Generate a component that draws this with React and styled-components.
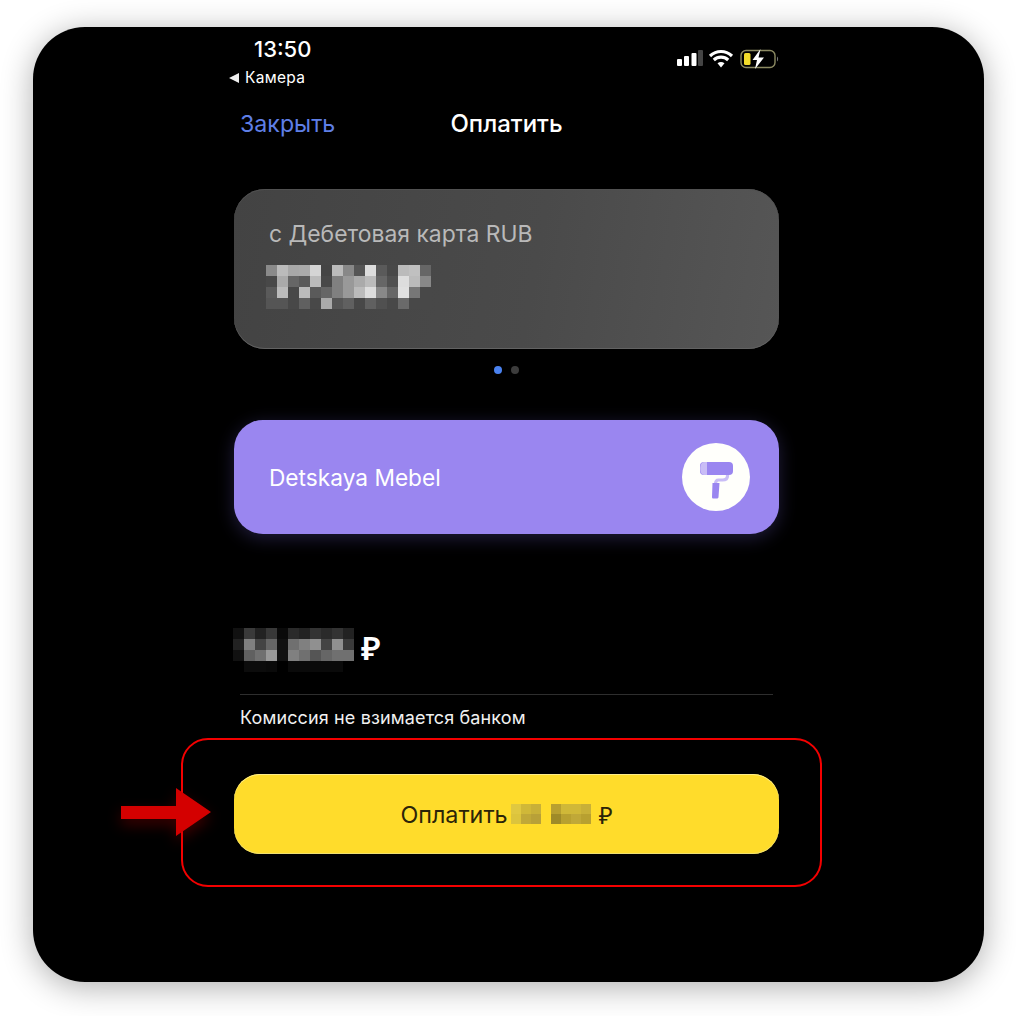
import React from "react";
import styled, { createGlobalStyle } from "styled-components";

const Global = createGlobalStyle`
  html, body { margin: 0; padding: 0; background: #fff; }
  body { font-family: Inter, "Noto Sans", "Liberation Sans", sans-serif; -webkit-font-smoothing: antialiased; }
`;
const Page = styled.div`
  width: 1016px;
  height: 1016px;
  box-sizing: border-box;
  padding: 27px 32px 34px 33px;
  overflow: hidden;
`;
const Frame = styled.main`
  width: 951px;
  height: 955px;
  box-sizing: border-box;
  padding: 9px 0 0 201px;
  background: #000;
  border-radius: 52px;
  box-shadow: 0 5px 32px rgba(0, 0, 0, 0.32);
  display: flex;
  flex-direction: column;
  align-items: flex-start;
  color: #fff;
`;
const StatusBar = styled.header`
  width: 545px;
  height: 54px;
  display: flex;
  justify-content: space-between;
  align-items: flex-start;
`;
const StatusLeft = styled.div`
  display: flex;
  flex-direction: column;
  margin-left: -5px;
`;
const Time = styled.div`
  font-size: 22px;
  line-height: 26px;
  font-weight: 500;
  padding-left: 25px;
`;
const BackLink = styled.div`
  font-size: 15.5px;
  line-height: 20px;
  margin-top: 6px;
  display: flex;
  align-items: center;
  gap: 6px;
  letter-spacing: 0.3px;
`;
const BackArrow = styled.span`
  width: 0;
  height: 0;
  border-style: solid;
  border-width: 5px 10px 5px 0;
  border-color: transparent #eee transparent transparent;
`;
const StatusIcons = styled.svg`
  display: block;
  margin-top: 13px;
`;
const NavBar = styled.nav`
  width: 545px;
  height: 40px;
  margin-top: 13px;
  box-sizing: border-box;
  padding-left: 6px;
  display: grid;
  grid-template-columns: 1fr auto 1fr;
  align-items: center;
`;
const NavLink = styled.div`
  font-size: 23.2px;
  padding-top: 2px;
  color: #5f7fe6;
`;
const NavTitle = styled.div`
  font-size: 24px;
  font-weight: 500;
  margin-right: 6px;
`;
const SourceCard = styled.section`
  width: 545px;
  height: 160px;
  margin-top: 46px;
  box-sizing: border-box;
  padding: 29px 0 0 35px;
  border-radius: 31px;
  background: linear-gradient(100deg, #434343 0%, #4a4a4a 55%, #565656 100%);
  box-shadow: inset 0 -1px 0 #626262, inset 0 1px 0 #515151;
`;
const CardLabel = styled.div`
  font-size: 22.9px;
  line-height: 32px;
  color: #b9b9b9;
`;
const Mosaic = styled.div`
  display: grid;
  grid-template-columns: repeat(${(p) => p.$cols}, ${(p) => p.$size}px);
  grid-auto-rows: ${(p) => p.$size}px;
`;
const CardMosaic = styled(Mosaic)`
  margin: 15px 0 0 -3px;
`;
const Cell = styled.i`
  display: block;
  background: ${(p) => p.$color};
`;
const Dots = styled.div`
  width: 545px;
  height: 8px;
  margin-top: 17px;
  display: flex;
  justify-content: center;
  gap: 9px;
`;
const Dot = styled.span`
  width: 8px;
  height: 8px;
  border-radius: 50%;
  background: ${(p) => (p.$active ? "#4a82f0" : "#3c3c3c")};
`;
const MerchantCard = styled.section`
  width: 545px;
  height: 114px;
  margin-top: 46px;
  box-sizing: border-box;
  padding: 0 29px 0 35px;
  border-radius: 29px;
  background: #9a86f0;
  box-shadow: 0 4px 18px rgba(120, 105, 220, 0.28);
  display: flex;
  align-items: center;
  justify-content: space-between;
  font-size: 22.7px;
`;
const Amount = styled.div`
  width: 545px;
  margin-top: 94px;
  display: flex;
  align-items: flex-start;
`;
const AmountMosaic = styled(Mosaic)`
  margin-left: -1px;
`;
const AmountSign = styled.span`
  font-size: 33px;
  line-height: 38px;
  font-weight: 600;
  margin: 1px 0 0 7px;
  font-family: "Noto Sans", Inter, sans-serif;
`;
const Divider = styled.hr`
  width: 533px;
  margin: 22px 0 0 6px;
  border: 0;
  height: 1px;
  background: #2e2e2e;
`;
const Fee = styled.div`
  margin: 12px 0 0 6px;
  font-size: 18px;
  line-height: 22px;
  color: #f0f0f0;
  letter-spacing: 0.13px;
`;
const Highlight = styled.div`
  position: relative;
  width: 641px;
  height: 149px;
  box-sizing: border-box;
  margin: 9px 0 0 -53px;
  padding: 34px 0 0 51px;
  border: 2px solid #f40000;
  border-radius: 27px;
`;
const PayButton = styled.button`
  width: 545px;
  height: 80px;
  border: 0;
  border-radius: 26px;
  background: #ffdc2b;
  box-shadow: inset 0 1px 0 #ffee8a, inset 0 -1px 0 #f0e070;
  color: #2b2408;
  font: inherit;
  font-size: 23.3px;
  display: flex;
  align-items: center;
  justify-content: center;
  padding: 0;
`;
const PayMosaic = styled(Mosaic)`
  margin: 0 10px 0 3px;
`;
const PayRuble = styled.span`
  font-size: 24px;
  margin-left: 8px;
  font-family: "Noto Sans", Inter, sans-serif;
`;
const Arrow = styled.svg`
  position: absolute;
  left: -62px;
  top: 48px;
  overflow: visible;
  filter: drop-shadow(0 6px 7px rgba(170, 0, 0, 0.35));
`;

const cardPixels = [
  "#8a8a8a #bbb #a8a8a8 #aaa #d5d5d5 #444 #bbb #888 #555 #ddd #5a5a5a #484848 #bbb #c0c0c0 #666",
  "#484848 #aaa #666 #5a5a5a #bbb #484848 #808080 #999 #aaa #bbb #666 #505050 #ddd #bbb #888",
  "#5a5a5a #bbb #484848 #bbb #5a5a5a #666 #808080 #999 #bbb #ddd #888 #666 #e0e0e0 #777 #484848",
  "#555 #555 #484848 #606060 #484848 #aaa #555 #606060 #484848 #606060 #505050 #484848 #6a6a6a #484848 #484848",
].join(" ").split(" ");
const amountPixels = [
  "#111 #3a3a3a #222 #383838 #0a0a0a #2a2a2a #222 #333 #2a2a2a #333 #222",
  "#222 #808080 #444 #666 #111 #707070 #808080 #909090 #444 #909090 #3a3a3a",
  "#111 #606060 #707070 #999 #111 #808080 #707070 #555 #666 #707070 #707070",
  "#000 #0c0c0c #0c0c0c #0a0a0a #000 #0a0a0a #0a0a0a #0a0a0a #0a0a0a #0a0a0a #000",
].join(" ").split(" ");
const payPixelsA = "#e0c840 #d0b838 #c8b038 #dcc43c #c0a838 #b8a038".split(" ");
const payPixelsB = "#b8a030 #d0b838 #d0b838 #c8b038 #9e8a28 #b8a030 #c0a838 #b8a030".split(" ");

const Pixels = ({ as: Comp = Mosaic, data, cols, size }) => (
  <Comp $cols={cols} $size={size}>
    {data.map((c, i) => (
      <Cell key={i} $color={c} />
    ))}
  </Comp>
);

const StatusGlyphs = () => (
  <StatusIcons width="102" height="22" viewBox="0 0 102 22">
    <rect x="0" y="10" width="5" height="7" rx="1" fill="#fff" />
    <rect x="7" y="7" width="5" height="10" rx="1" fill="#fff" />
    <rect x="14.5" y="4" width="5" height="13" rx="1" fill="#fff" />
    <rect x="21" y="1" width="5" height="16" rx="1" fill="#444" />
    <path d="M33 7 C39.5 1 48.5 1 55 7 M36.8 11 C41 7.2 47 7.2 51.2 11" stroke="#fff" strokeWidth="3.2" fill="none" />
    <path d="M40.5 14.3 C42.8 12.6 45.2 12.6 47.5 14.3 L44 18.4 Z" fill="#fff" />
    <rect x="64" y="1.5" width="34" height="17" rx="5" fill="none" stroke="#8c8a62" strokeWidth="1.4" />
    <rect x="67" y="4" width="6.5" height="12" rx="1.5" fill="#f2dc2a" />
    <path d="M83.5 0 L75.5 11 H80 L78 20 L87 8.5 H81.5 Z" fill="#fff" />
    <path d="M100 7.5 C101.5 8.5 101.5 11.5 100 12.5 Z" fill="#777" />
  </StatusIcons>
);

const RollerLogo = () => (
  <svg width="68" height="68" viewBox="0 0 68 68">
    <circle cx="34" cy="34" r="34" fill="#fffffb" />
    <path d="M45.5 31 v2 c0 2.5 -2 4 -5 4 h-4 c-2 0 -3 1 -3 4" fill="none" stroke="#c9bdf6" strokeWidth="3.2" />
    <rect x="18" y="19" width="33" height="13" rx="4" fill="#9a86f0" />
    <path d="M22 19 h3 v13 h-3 c-5 0 -5 -13 0 -13 Z" fill="#c9bdf6" />
    <path d="M30.5 40 h7 l-1 14 c0 1 -1 1.5 -2 1.5 h-3 c-1 0 -1.5 -.5 -1.5 -1.5 Z" fill="#9a86f0" />
  </svg>
);

export default function App() {
  return (
    <Page>
      <Global />
      <Frame>
        <StatusBar>
          <StatusLeft>
            <Time>13:50</Time>
            <BackLink>
              <BackArrow />
              Камера
            </BackLink>
          </StatusLeft>
          <StatusGlyphs />
        </StatusBar>
        <NavBar>
          <NavLink>Закрыть</NavLink>
          <NavTitle>Оплатить</NavTitle>
        </NavBar>
        <SourceCard>
          <CardLabel>с Дебетовая карта RUB</CardLabel>
          <Pixels as={CardMosaic} data={cardPixels} cols={15} size={11} />
        </SourceCard>
        <Dots>
          <Dot $active />
          <Dot />
        </Dots>
        <MerchantCard>
          <span>Detskaya Mebel</span>
          <RollerLogo />
        </MerchantCard>
        <Amount>
          <Pixels as={AmountMosaic} data={amountPixels} cols={11} size={11} />
          <AmountSign>₽</AmountSign>
        </Amount>
        <Divider />
        <Fee>Комиссия не взимается банком</Fee>
        <Highlight>
          <Arrow width="90" height="48" viewBox="0 0 90 48">
            <path d="M0 18 H55 V0 L90 24 L55 48 V31 H0 Z" fill="#d40000" />
          </Arrow>
          <PayButton>
            Оплатить
            <Pixels as={PayMosaic} data={payPixelsA} cols={3} size={10} />
            <Pixels as={Mosaic} data={payPixelsB} cols={4} size={10} />
            <PayRuble>₽</PayRuble>
          </PayButton>
        </Highlight>
      </Frame>
    </Page>
  );
}
